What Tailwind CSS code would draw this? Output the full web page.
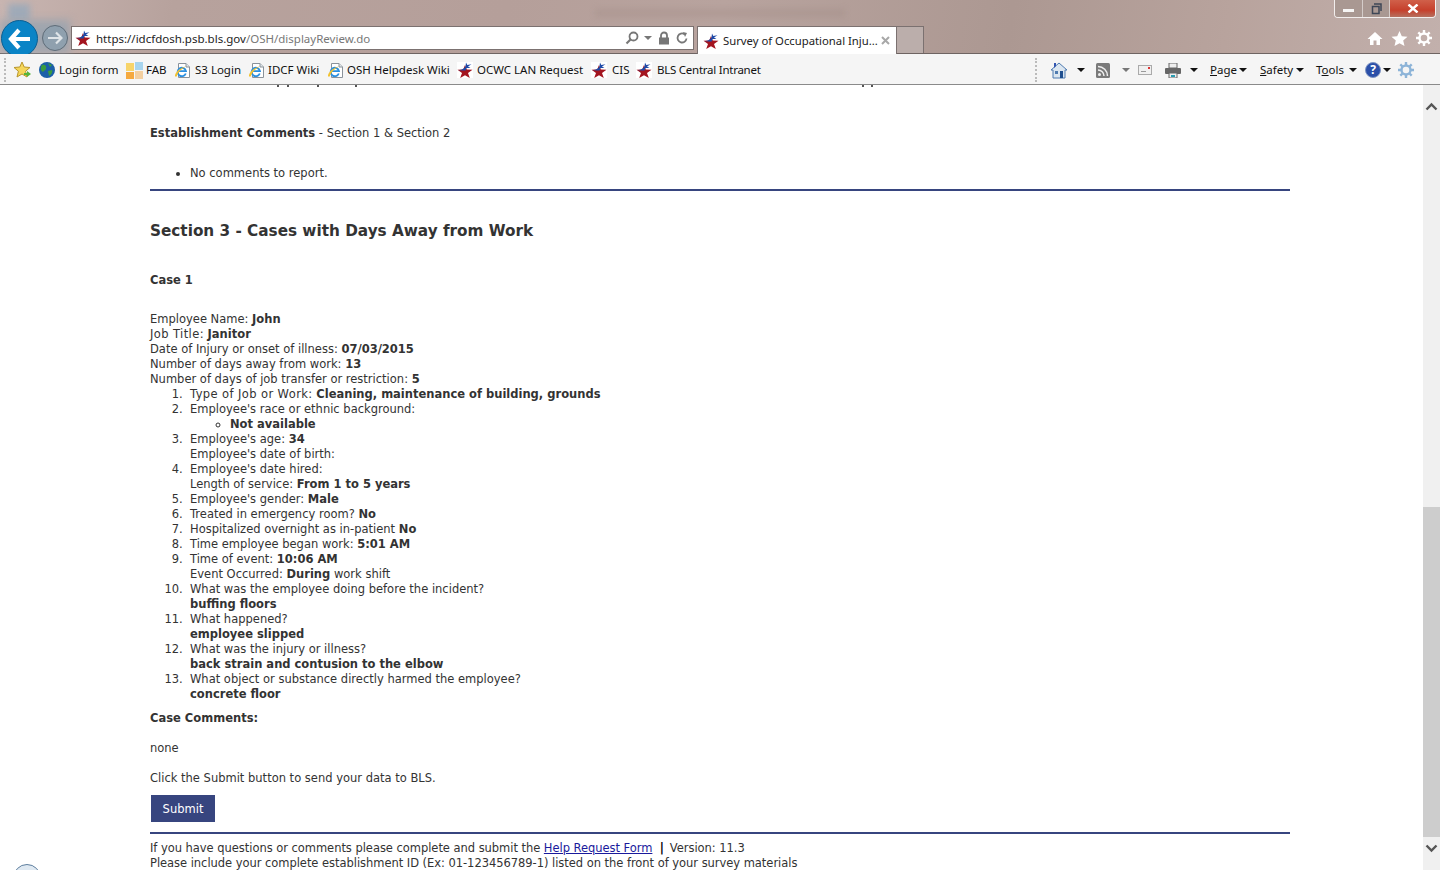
<!DOCTYPE html>
<html>
<head>
<meta charset="UTF-8" />
<title>Survey of Occupational Injuries</title>
<script src="https://cdn.jsdelivr.net/npm/@tailwindcss/browser@4"></script>
</head>
<body class="w-[1440px] h-[870px] overflow-hidden bg-white font-['DejaVu_Sans',sans-serif] text-[11.5px] text-[#333]">
<svg width="0" height="0" class="absolute">
  <symbol id="bls" viewBox="0 0 16 16">
    <rect width="16" height="16" fill="#fff"/>
    <path d="M8 3 L9.800 7.500 L15.500 7.800 L11 11 L12.800 16 L8 13.200 L3.200 16 L5 11 L.5 7.800 L6.200 7.500Z" fill="#a3141f"/>
    <path d="M1 8 C4 8.500 7 7 8.500 4.500 L9 .5 L10.300 3 L14.500 2.200 L11 4.600 L13.500 6 L9.500 6 L8.600 8.500 L5.500 8.500Z" fill="#1e4aa8"/>
  </symbol>
  <symbol id="ie" viewBox="0 0 17 17">
    <path d="M4.500 1.500 H12 L15.500 5 V15.500 H4.500 Z" fill="#fff" stroke="#8a929a"/>
    <path d="M12 1.500 V5 H15.500" fill="#dfe5ea" stroke="#8a929a"/>
    <path d="M11.800 11.500 A4.200 4.200 0 1 1 12 9.200 H4.500" fill="none" stroke="#2a8fe0" stroke-width="1.800"/>
    <path d="M1 14.500 C.5 11 6 5.500 12 4.500 C8 6.500 3.500 10.500 2.800 14.500Z" fill="#f2c230"/>
  </symbol>
  <symbol id="caret" viewBox="0 0 8 4"><path d="M0 0 H8 L4 4Z" fill="currentColor"/></symbol>
</svg>

<!-- window frame -->
<header class="relative h-[54px] flex items-end overflow-visible bg-[linear-gradient(100deg,#c8b5b1_0%,#b7a29d_12%,#b59f9a_35%,#b8a39e_50%,#ac9892_70%,#b8a39d_85%,#c2b0ac_100%)] border-b border-[#6e6462] font-['Noto_Sans',sans-serif]">
  <div class="absolute left-[8px] top-[4px] w-[22px] h-[16px] bg-[#8fa6bc]/70 blur-[3px]"></div>
  <div class="absolute left-0 top-[20px] w-[70px] h-[33px] bg-[#8ea1b0]/70 blur-[4px]"></div>
  <div class="absolute left-[595px] top-[9px] w-[250px] h-[8px] bg-[#9a8782]/30 blur-[3px]"></div>
  <div class="relative w-[71px] h-full flex items-end shrink-0">
    <div class="ml-[1px] w-[37px] h-[37px] -mb-[4px] shrink-0 rounded-full bg-[#0a84c6] border border-[#0b5f92] flex items-center justify-center">
      <svg width="24" height="22" viewBox="0 0 24 22"><path d="M11 2 L3 11 L11 20 M3 11 H22" fill="none" stroke="#fff" stroke-width="4.200"/></svg>
    </div>
    <div class="ml-[4px] mb-[2px] w-[26px] h-[26px] shrink-0 rounded-full bg-[#8fa0ae] border border-[#5f6c78] flex items-center justify-center">
      <svg width="16" height="14" viewBox="0 0 16 14"><path d="M9 1.500 L14.500 7 L9 12.500 M14 7 H1" fill="none" stroke="#dfe4e8" stroke-width="2.200"/></svg>
    </div>
  </div>
  <div class="relative w-[623px] h-[24px] mb-[3px] shrink-0 bg-white border border-[#7b7170] flex items-center pl-[3px] pr-[3px]">
    <svg width="16" height="16" class="mr-[5px] shrink-0"><use href="#bls"/></svg>
    <span class="text-[11.5px] pt-[2px] text-[#222]">https://idcfdosh.psb.bls.gov<span class="text-[#777]">/OSH/displayReview.do</span></span>
    <div class="ml-auto flex items-center gap-[6px] mr-[2px] text-[#777]">
      <svg width="14" height="14" viewBox="0 0 14 14"><circle cx="8.500" cy="5.500" r="4" fill="none" stroke="#777" stroke-width="1.800"/><path d="M5.500 8.500 L1.500 12.500" stroke="#777" stroke-width="2.200"/></svg>
      <svg width="8" height="4" class="-ml-[1px]"><use href="#caret"/></svg>
      <svg width="12" height="14" viewBox="0 0 12 14"><path d="M3 7 V4.500 a3 3 0 0 1 6 0 V7" fill="none" stroke="#777" stroke-width="1.800"/><rect x="1" y="6.500" width="10" height="7" fill="#777"/></svg>
      <svg width="12" height="12" viewBox="0 0 12 12"><path d="M10.500 6.500 A4.500 4.500 0 1 1 8.500 2.200" fill="none" stroke="#777" stroke-width="1.800"/><path d="M7 0 L11 1 L9 5Z" fill="#777"/></svg>
    </div>
  </div>
  <div class="relative ml-[3px] w-[200px] h-[28px] -mb-[1px] shrink-0 bg-white border border-b-0 border-[#7b7170] flex items-center pl-[5px] pr-[6px]">
    <svg width="16" height="16" class="mr-[4px] shrink-0"><use href="#bls"/></svg>
    <span class="text-[11.3px] pt-[2px] text-[#222] whitespace-nowrap">Survey of Occupational Inju...</span>
    <svg width="9" height="9" viewBox="0 0 9 9" class="ml-auto"><path d="M1 1 L8 8 M8 1 L1 8" stroke="#a8a8a8" stroke-width="2"/></svg>
  </div>
  <div class="relative w-[27px] h-[27px] shrink-0 bg-[#bbaeab] border-r border-t border-[#7b7170]"></div>
  <div class="relative ml-auto mr-[8px] mb-[7px] flex items-center gap-[8px]">
    <svg width="16" height="15" viewBox="0 0 16 15"><path d="M8 1 L15.500 8 H13 V14 H9.500 V9.500 H6.500 V14 H3 V8 H.5 Z" fill="#fff"/></svg>
    <svg width="17" height="15" viewBox="0 0 16 15"><path d="M8 0 L10.300 5.300 L16 5.800 L11.700 9.600 L13 15 L8 12.200 L3 15 L4.300 9.600 L0 5.800 L5.700 5.300Z" fill="#fff"/></svg>
    <svg width="16" height="16" viewBox="0 0 16 16"><circle cx="8" cy="8" r="4.500" fill="none" stroke="#fff" stroke-width="2.400"/><path d="M8 0 V3 M8 13 V16 M0 8 H3 M13 8 H16 M2.300 2.300 L4.500 4.500 M11.500 11.500 L13.700 13.700 M13.700 2.300 L11.500 4.500 M4.500 11.500 L2.300 13.700" stroke="#fff" stroke-width="2.400"/></svg>
  </div>
  <div class="absolute top-0 right-[4px] w-[102px] h-[18px] flex rounded-b-[4px] border border-t-0 border-white/80 overflow-hidden">
    <div class="w-[28px] bg-[#a99892] border-r border-white/50 flex items-center justify-center"><div class="w-[11px] h-[3px] bg-white/90 mt-[3px]"></div></div>
    <div class="w-[27px] bg-[#a99892] border-r border-white/50 flex items-center justify-center"><svg width="11" height="12" viewBox="0 0 11 12"><path d="M3 1 H10 V8 M1.500 3.500 H8 V10.500 H1.500 Z" fill="none" stroke="#3d4656" stroke-width="1.500"/></svg></div>
    <div class="flex-1 bg-[linear-gradient(#d0604a,#c6402c_60%,#b5705f)] flex items-center justify-center"><svg width="12" height="9" viewBox="0 0 12 9"><path d="M1.500 .5 L10.500 8.500 M10.500 .5 L1.500 8.500" stroke="#fff" stroke-width="2.400"/></svg></div>
  </div>
</header>

<!-- favorites and command bar -->
<nav class="relative z-10 h-[31px] pt-[2px] bg-[#f5f5f5] border-b border-[#8a8a8a] flex items-center font-['Noto_Sans',sans-serif] text-[11.5px] text-[#111]">
  <div class="w-[2px] h-[24px] ml-[4px] border-l-2 border-dotted border-[#bbb]"></div>
  <svg width="18" height="18" viewBox="0 0 18 18" class="ml-[8px] shrink-0"><path d="M8 1 L10.200 6 L16 6.500 L11.600 10.200 L13 16 L8 13 L3 16 L4.400 10.200 L0 6.500 L5.800 6Z" fill="#f5d65a" stroke="#b8962c"/><path d="M10 12 H13 V10 L17 13 L13 16 V14 H10Z" fill="#55b53a"/></svg>
  <svg width="16" height="16" viewBox="0 0 16 16" class="ml-[7px] shrink-0"><circle cx="8" cy="8" r="8" fill="#1b5fa8"/><path d="M3 3 C6 2 8 4 7 7 C6 9 5 8 4 10 C2 9 1 6 3 3Z M9 9 L13 8 C14 10 12 13 10 14Z M9 1 L13 3 L11 5Z" fill="#3a9c3e"/></svg>
  <span class="ml-[4px] w-[59px] whitespace-nowrap">Login form</span>
  <svg width="17" height="17" viewBox="0 0 17 17" class="ml-[8px] shrink-0"><rect x="0" y="1" width="8" height="8" fill="#f7d46a"/><rect x="9" y="0" width="8" height="8" fill="#a7d4ee"/><rect x="0" y="10" width="8" height="7" fill="#f5a93f"/><rect x="9" y="9" width="8" height="8" fill="#f3cfa0"/></svg>
  <span class="ml-[3px] w-[21px] whitespace-nowrap">FAB</span>
  <svg width="17" height="17" class="ml-[7px] shrink-0"><use href="#ie"/></svg>
  <span class="ml-[4px] w-[45px] whitespace-nowrap">S3 Login</span>
  <svg width="17" height="17" class="ml-[8px] shrink-0"><use href="#ie"/></svg>
  <span class="ml-[3px] w-[51px] whitespace-nowrap">IDCF Wiki</span>
  <svg width="17" height="17" class="ml-[8px] shrink-0"><use href="#ie"/></svg>
  <span class="ml-[3px] w-[102px] whitespace-nowrap">OSH Helpdesk Wiki</span>
  <svg width="16" height="16" class="ml-[8px] shrink-0"><use href="#bls"/></svg>
  <span class="ml-[4px] w-[107px] whitespace-nowrap">OCWC LAN Request</span>
  <svg width="16" height="16" class="ml-[7px] shrink-0"><use href="#bls"/></svg>
  <span class="ml-[5px] w-[18px] whitespace-nowrap">CIS</span>
  <svg width="16" height="16" class="ml-[6px] shrink-0"><use href="#bls"/></svg>
  <span class="ml-[5px] whitespace-nowrap tracking-[-0.25px]">BLS Central Intranet</span>

  <div class="ml-auto flex items-center mr-[26px]">
    <div class="w-[2px] h-[24px] mr-[14px] border-l-2 border-dotted border-[#bbb]"></div>
    <svg width="16" height="17" viewBox="0 0 16 17"><path d="M8 1 L16 8 H14 V16 H2 V8 H0 Z" fill="#dbe6f0" stroke="#4f7bb0"/><rect x="9" y="9" width="3" height="7" fill="#1f4f8f"/><rect x="4" y="9" width="3" height="3" fill="#4f7bb0"/><path d="M3 1 H5 V4 L3 6Z" fill="#3355b0"/></svg>
    <svg width="8" height="4" class="ml-[10px]"><use href="#caret"/></svg>
    <svg width="14" height="15" viewBox="0 0 14 15" class="ml-[11px]"><rect width="14" height="15" rx="1.500" fill="#7a7a7a"/><circle cx="3.500" cy="11.500" r="1.500" fill="#eee"/><path d="M2 7 A6 6 0 0 1 8 13 M2 3.500 A9.500 9.500 0 0 1 11.500 13" fill="none" stroke="#eee" stroke-width="1.500"/></svg>
    <svg width="8" height="4" class="ml-[12px] text-[#777]"><use href="#caret"/></svg>
    <svg width="14" height="10" viewBox="0 0 14 10" class="ml-[8px]"><rect x=".5" y=".5" width="13" height="9" fill="#f0f0f0" stroke="#aaa"/><rect x="3" y="6" width="5" height="1" fill="#999"/><rect x="10" y="2" width="2" height="2" fill="#d33"/></svg>
    <svg width="16" height="15" viewBox="0 0 16 15" class="ml-[13px]"><rect x="4" y="0" width="8" height="5" fill="#eee" stroke="#666"/><rect x="0" y="5" width="16" height="6" rx="1" fill="#666"/><rect x="4" y="10" width="8" height="5" fill="#eee" stroke="#666"/><rect x="6" y="12" width="4" height="2" fill="#2a9bb0"/></svg>
    <svg width="8" height="4" class="ml-[9px]"><use href="#caret"/></svg>
    <span class="ml-[12px] w-[26px] whitespace-nowrap"><span class="underline">P</span>age</span>
    <svg width="8" height="4" class="ml-[3px]"><use href="#caret"/></svg>
    <span class="ml-[13px] w-[33px] whitespace-nowrap"><span class="underline">S</span>afety</span>
    <svg width="8" height="4" class="ml-[3px]"><use href="#caret"/></svg>
    <span class="ml-[12px] w-[30px] whitespace-nowrap">T<span class="underline">o</span>ols</span>
    <svg width="8" height="4" class="ml-[3px]"><use href="#caret"/></svg>
    <div class="ml-[8px] w-[16px] h-[16px] rounded-full bg-[#2b4fa8] border border-[#7f95c4] text-white text-[12px] font-bold leading-[14px] text-center">?</div>
    <svg width="8" height="4" class="ml-[2px]"><use href="#caret"/></svg>
    <svg width="16" height="16" viewBox="0 0 16 16" class="ml-[7px]"><circle cx="8" cy="8" r="4.500" fill="none" stroke="#8db4d8" stroke-width="2.400"/><path d="M8 0 V3 M8 13 V16 M0 8 H3 M13 8 H16 M2.300 2.300 L4.500 4.500 M11.500 11.500 L13.700 13.700 M13.700 2.300 L11.500 4.500 M4.500 11.500 L2.300 13.700" stroke="#8db4d8" stroke-width="2.400"/></svg>
  </div>
</nav>

<div class="relative flex h-[785px] overflow-hidden">
  <main class="w-[1423px] shrink-0 pl-[150px] pr-[133px] leading-[15px]">
    <p class="mt-[41px]"><b>Establishment Comments</b> - Section 1 &amp; Section 2</p>
    <ul class="mt-[25px] pl-[40px] list-disc">
      <li>No comments to report.</li>
    </ul>
    <hr class="mt-[8px] border-0 h-[2px] bg-[#37457f]" />
    <h2 class="mt-[30px] text-[15.25px] leading-[20px] font-bold">Section 3 - Cases with Days Away from Work</h2>
    <p class="mt-[32px] font-bold">Case 1</p>
    <div class="mt-[24px]">
      Employee Name: <b>John</b><br />
      <span class="tracking-[0.4px]">Job Title:</span> <b>Janitor</b><br />
      Date of Injury or onset of illness: <b>07/03/2015</b><br />
      Number of days away from work: <b>13</b><br />
      Number of days of job transfer or restriction: <b>5</b>
    </div>
    <ol class="pl-[40px]">
      <li class="list-['1.__']"><span class="tracking-[0.4px]">Type of Job or Work:</span> <b>Cleaning, maintenance of building, grounds</b></li>
      <li class="list-['2.__']">Employee's race or ethnic background:
        <ul class="pl-[40px] list-[circle]"><li><b>Not available</b></li></ul>
      </li>
      <li class="list-['3.__']">Employee's age: <b>34</b><br />Employee's date of birth:</li>
      <li class="list-['4.__']">Employee's date hired:<br />Length of service: <b>From 1 to 5 years</b></li>
      <li class="list-['5.__']">Employee's gender: <b>Male</b></li>
      <li class="list-['6.__']">Treated in emergency room? <b>No</b></li>
      <li class="list-['7.__']">Hospitalized overnight as in-patient <b>No</b></li>
      <li class="list-['8.__']">Time employee began work: <b>5:01 AM</b></li>
      <li class="list-['9.__']">Time of event: <b>10:06 AM</b><br />Event Occurred: <b>During</b> work shift</li>
      <li class="list-['10.__']">What was the employee doing before the incident?<br /><b>buffing floors</b></li>
      <li class="list-['11.__']">What happened?<br /><b>employee slipped</b></li>
      <li class="list-['12.__']">What was the injury or illness?<br /><b>back strain and contusion to the elbow</b></li>
      <li class="list-['13.__']">What object or substance directly harmed the employee?<br /><b>concrete floor</b></li>
    </ol>
    <p class="mt-[9px] font-bold">Case Comments:</p>
    <p class="mt-[15px]">none</p>
    <p class="mt-[15px]">Click the Submit button to send your data to BLS.</p>
    <button class="block mt-[9px] ml-[1px] w-[64px] h-[27px] pt-[1px] bg-[#37457f] text-white text-[11.5px]">Submit</button>
    <hr class="mt-[10px] border-0 h-[2px] bg-[#37457f]" />
    <p class="mt-[7px] tracking-[-0.04px]">If you have questions or comments please complete and submit the <a class="text-[#1a1a9c] underline">Help Request Form</a> &nbsp;<b class="text-black">|</b><span class="ml-[6px]">Version: 11.3</span><br />Please include your complete establishment ID (Ex: 01-123456789-1) listed on the front of your survey materials</p>
  </main>
  <aside class="w-[17px] bg-[#f0f0f0] flex flex-col items-center justify-between relative">
    <svg width="13" height="9" viewBox="0 0 13 9" class="mt-[17px]"><path d="M1.500 7.500 L6.500 2.500 L11.500 7.500" fill="none" stroke="#555" stroke-width="2.400"/></svg>
    <div class="absolute left-0 right-0 top-[422px] h-[330px] bg-[#cdcdcd]"></div>
    <svg width="13" height="9" viewBox="0 0 13 9" class="mb-[17px]"><path d="M1.500 1.500 L6.500 6.500 L11.500 1.500" fill="none" stroke="#555" stroke-width="2.400"/></svg>
  </aside>
  <!-- descenders of the line scrolled away under the toolbar -->
  <div class="absolute left-[277px] top-0 w-[2px] h-[2px] bg-[#555]"></div>
  <div class="absolute left-[287px] top-0 w-[2px] h-[2px] bg-[#555]"></div>
  <div class="absolute left-[317px] top-0 w-[2px] h-[2px] bg-[#555]"></div>
  <div class="absolute left-[355px] top-0 w-[2px] h-[2px] bg-[#555]"></div>
  <div class="absolute left-[862px] top-0 w-[2px] h-[2px] bg-[#555]"></div>
  <div class="absolute left-[871px] top-0 w-[2px] h-[2px] bg-[#555]"></div>
  <div class="absolute left-[13px] top-[779px] w-[28px] h-[28px] rounded-full border border-[#5f7f9f] bg-[#dfe9f2]"></div>
</div>
</body>
</html>
